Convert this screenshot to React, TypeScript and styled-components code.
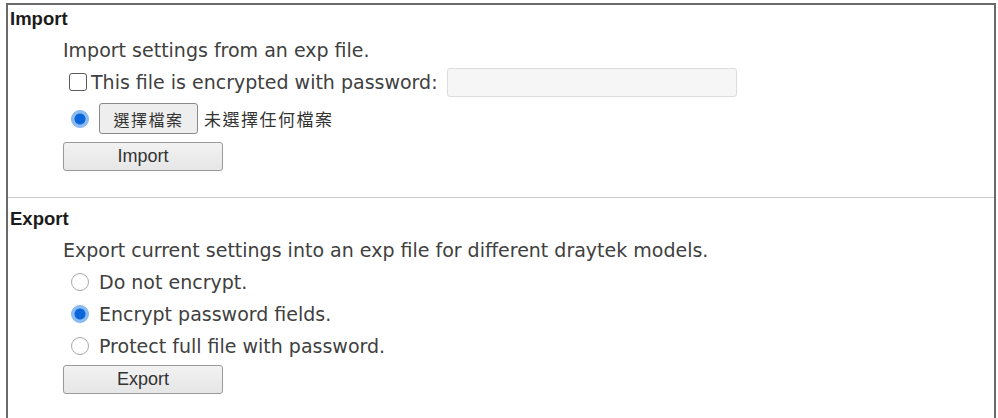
import React, { useState } from "react";
import styled, { createGlobalStyle } from "styled-components";

const GlobalStyle = createGlobalStyle`
  html, body {
    margin: 0;
    padding: 0;
    background: #ffffff;
    overflow: hidden;
  }
  body {
    font-family: "DejaVu Sans", Verdana, sans-serif;
    color: #404040;
  }
`;

const Page = styled.div`
  padding: 3px 2px 0 6px;
`;

const Frame = styled.div`
  box-sizing: border-box;
  height: calc(100vh - 3px);
  border: 2px solid #6a6a6a;
  border-bottom: none;
`;

const Section = styled.section<{ $divider?: boolean }>`
  padding: 0 0 0 2px;
  border-bottom: ${(p) => (p.$divider ? "1px solid #c9c9c9" : "none")};
`;

const Header = styled.div<{ $top: number }>`
  margin-top: ${(p) => p.$top}px;
  padding-top: 1px;
  height: 26px;
  line-height: 26px;
  font-family: "Liberation Sans", Arial, sans-serif;
  font-weight: bold;
  font-size: 18.5px;
  color: #1c1c1c;
`;

const Body = styled.div<{ $bottom: number }>`
  display: flex;
  flex-direction: column;
  align-items: flex-start;
  padding: 0 0 ${(p) => p.$bottom}px 53px;
`;

const Desc = styled.div`
  margin-top: 2px;
  height: 32px;
  line-height: 32px;
  font-size: 19px;
`;

const Row = styled.label<{ $top?: number; $h?: number }>`
  display: flex;
  align-items: center;
  margin-top: ${(p) => p.$top ?? 0}px;
  height: ${(p) => p.$h ?? 32}px;
  font-size: 19px;
  line-height: 32px;
  cursor: pointer;
`;

const CheckBox = styled.input.attrs({ type: "checkbox" })`
  appearance: none;
  margin: 0 4px 0 6px;
  width: 18px;
  height: 18px;
  border: 1.5px solid #5a5a5a;
  border-radius: 3px;
  background: #fff;
`;

const Radio = styled.input.attrs({ type: "radio" })`
  appearance: none;
  margin: 0 10px 0 8px;
  width: 18px;
  height: 18px;
  border-radius: 50%;
  border: 1px solid #a8a8a8;
  background: #fff;
  &:checked {
    border-color: #7db2ee;
    background: radial-gradient(circle, #0b66da 0 5px, #8dbcf2 6px 9px);
  }
`;

const PasswordInput = styled.input.attrs({ type: "password" })`
  margin-left: 9px;
  width: 290px;
  height: 29px;
  box-sizing: border-box;
  border: 1px solid #dcdcdc;
  border-radius: 3px;
  background: #f6f6f6;
`;

const FileButton = styled.button`
  margin: 0 6px 0 0;
  width: 99px;
  height: 31px;
  border: 1px solid #8a8a8a;
  border-radius: 3px;
  background: #eeeeee;
  font-family: "Noto Sans CJK TC", sans-serif;
  font-size: 16px;
  letter-spacing: 1.5px;
  color: #333;
  padding: 0;
`;

const FileName = styled.span`
  font-family: "Noto Sans CJK TC", sans-serif;
  font-size: 17px;
  letter-spacing: 1.5px;
  color: #333;
`;

const ActionButton = styled.button<{ $top: number }>`
  margin-top: ${(p) => p.$top}px;
  width: 160px;
  height: 29px;
  border: 1px solid #9a9a9a;
  border-radius: 3px;
  background: linear-gradient(#f2f2f2, #e6e6e6);
  font-family: "Liberation Sans", Arial, sans-serif;
  font-size: 18px;
  color: #333;
  padding: 0;
`;

const exportModes = [
  "Do not encrypt.",
  "Encrypt password fields.",
  "Protect full file with password.",
];

export default function App() {
  const [encrypted, setEncrypted] = useState(false);
  const [mode, setMode] = useState(1);

  return (
    <Page>
      <GlobalStyle />
      <Frame>
        <Section $divider>
          <Header $top={0}>Import</Header>
          <Body $bottom={26}>
            <Desc>Import settings from an exp file.</Desc>
            <Row>
              <CheckBox checked={encrypted} onChange={(e) => setEncrypted(e.target.checked)} />
              This file is encrypted with password:
              <PasswordInput />
            </Row>
            <Row $top={4} $h={33}>
              <Radio checked readOnly />
              <FileButton>選擇檔案</FileButton>
              <FileName>未選擇任何檔案</FileName>
            </Row>
            <ActionButton $top={7}>Import</ActionButton>
          </Body>
        </Section>
        <Section>
          <Header $top={7}>Export</Header>
          <Body $bottom={16}>
            <Desc>Export current settings into an exp file for different draytek models.</Desc>
            {exportModes.map((label, i) => (
              <Row key={label}>
                <Radio name="mode" checked={mode === i} onChange={() => setMode(i)} />
                {label}
              </Row>
            ))}
            <ActionButton $top={3}>Export</ActionButton>
          </Body>
        </Section>
      </Frame>
    </Page>
  );
}
